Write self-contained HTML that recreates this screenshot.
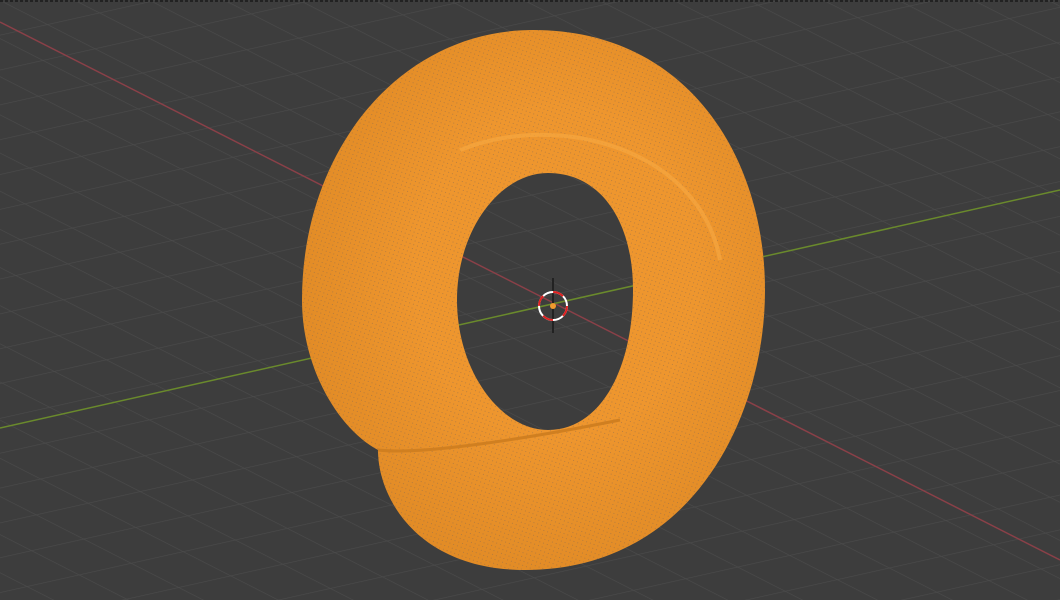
<!DOCTYPE html><html><head><style>html,body{margin:0;padding:0;background:#3d3d3d;overflow:hidden;width:1060px;height:600px}svg{display:block;overflow:hidden}</style></head><body>
<svg width="1060" height="600" viewBox="0 0 1060 600" xmlns="http://www.w3.org/2000/svg">
<defs>
<pattern id="g1" width="1060" height="34" patternUnits="userSpaceOnUse" patternTransform="rotate(27)">
<line x1="0" y1="0" x2="1060" y2="0" stroke="#4b4b4b" stroke-width="1.2"/></pattern>
<pattern id="g2" width="1060" height="34" patternUnits="userSpaceOnUse" patternTransform="rotate(-12.6)">
<line x1="0" y1="0" x2="1060" y2="0" stroke="#4b4b4b" stroke-width="1.2"/></pattern>
<pattern id="dots" width="4" height="4" patternUnits="userSpaceOnUse" patternTransform="rotate(20)">
<rect x="0" y="0" width="1" height="1" fill="#8a6a50" opacity="0.5"/></pattern>
<radialGradient id="tg" cx="0.55" cy="0.45" r="0.6">
<stop offset="0.5" stop-color="#ee962e"/><stop offset="1" stop-color="#e08a25"/></radialGradient>
</defs>
<rect width="1060" height="600" fill="#3d3d3d"/>
<rect x="0" y="0" width="1060" height="600" fill="url(#g1)"/>
<rect x="0" y="0" width="1060" height="600" fill="url(#g2)"/>
<line x1="0" y1="1" x2="1060" y2="1" stroke="#222" stroke-width="2" stroke-dasharray="3 2"/>
<line x1="0" y1="22" x2="1060" y2="560" stroke="#8a4048" stroke-width="1.5"/>
<line x1="0" y1="428" x2="1060" y2="190" stroke="#6a8a2c" stroke-width="1.5"/>
<path fill-rule="evenodd" fill="url(#tg)" d="M 533 30 C 690 30 765 160 765 290 C 765 420 690 570 525 570 C 420 570 378 500 378 450 C 340 430 302 370 302 300 C 302 150 400 30 533 30 Z M 548 173 C 500 173 457 230 457 300 C 457 370 500 430 548 430 C 600 430 633 370 633 290 C 633 220 600 173 548 173 Z"/>
<path fill-rule="evenodd" fill="url(#dots)" d="M 533 30 C 690 30 765 160 765 290 C 765 420 690 570 525 570 C 420 570 378 500 378 450 C 340 430 302 370 302 300 C 302 150 400 30 533 30 Z M 548 173 C 500 173 457 230 457 300 C 457 370 500 430 548 430 C 600 430 633 370 633 290 C 633 220 600 173 548 173 Z"/>
<path d="M378 450 C420 455 520 440 620 420" stroke="#d07f20" stroke-width="3" fill="none"/>
<path d="M460 150 C560 110 700 150 720 260" stroke="#f6a640" stroke-width="4" fill="none" opacity="0.7"/>
<line x1="553" y1="278" x2="553" y2="333" stroke="#222" stroke-width="2"/>
<circle cx="553" cy="306" r="14" fill="none" stroke="#fff" stroke-width="2"/>
<circle cx="553" cy="306" r="14" fill="none" stroke="#e02020" stroke-width="2" stroke-dasharray="11 11"/>
<circle cx="553" cy="306" r="3" fill="#f29a2e"/>
</svg></body></html>
